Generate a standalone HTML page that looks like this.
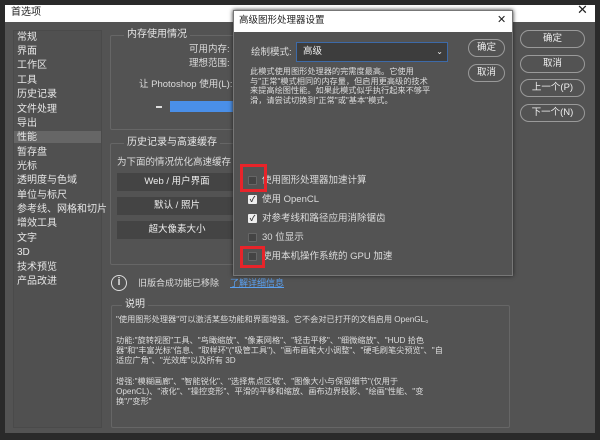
<!DOCTYPE html><html><head><meta charset="utf-8"><style>
*{margin:0;padding:0;box-sizing:border-box}
body{width:600px;height:440px;background:#2a2a2a;position:relative;overflow:hidden;font-family:"Liberation Sans","Noto Sans CJK SC",sans-serif;color:#dcdcdc;font-size:9.5px;line-height:12px}
.a{position:absolute;white-space:nowrap}
.main{left:5px;top:5px;width:590px;height:428px;background:#535353}
.tb{left:5px;top:5px;width:590px;height:17px;background:#fff;color:#222;font-size:10px;padding:2px 6px}
.side{left:13px;top:30px;width:89px;height:398px;border:1px solid #4a4a4a;background:#505050}
.it{left:17px;font-size:10px;color:#e6e6e6;line-height:12px}
.grp{border:1px solid #666;border-radius:2px}
.gt{background:#535353;padding:0 3px;font-size:10px;color:#e6e6e6}
.btn{border:1px solid #9a9a9a;border-radius:10px;text-align:center;font-size:9.5px;color:#eee;line-height:16px}
.dbtn{background:#444;text-align:center;color:#eee;line-height:18px}
.cb{width:9px;height:9px;border-radius:1px}
.on{background:#eee;color:#333;font-size:8px;line-height:9px;text-align:center;font-weight:bold}
.off{background:#444;border:1px solid #666}
.red{border:3px solid #e8242a}
</style></head><body>
<div class="a main"></div>
<div class="a tb">首选项</div>
<div class="a" style="left:577px;top:4px;color:#222;font-size:13px">✕</div>
<div class="a side"></div>
<div class="a" style="left:14px;top:131px;width:87px;height:12px;background:#666"></div>
<div class="a it" style="top:32px">常规</div><div class="a it" style="top:46px">界面</div><div class="a it" style="top:60px">工作区</div><div class="a it" style="top:75px">工具</div><div class="a it" style="top:89px">历史记录</div><div class="a it" style="top:104px">文件处理</div><div class="a it" style="top:118px">导出</div><div class="a it" style="top:132px">性能</div><div class="a it" style="top:147px">暂存盘</div><div class="a it" style="top:161px">光标</div><div class="a it" style="top:175px">透明度与色域</div><div class="a it" style="top:190px">单位与标尺</div><div class="a it" style="top:204px">参考线、网格和切片</div><div class="a it" style="top:218px">增效工具</div><div class="a it" style="top:233px">文字</div><div class="a it" style="top:247px">3D</div><div class="a it" style="top:262px">技术预览</div><div class="a it" style="top:276px">产品改进</div>
<div class="a grp" style="left:110px;top:35px;width:140px;height:95px"></div>
<div class="a gt" style="left:124px;top:29px">内存使用情况</div>
<div class="a" style="left:189px;top:44px">可用内存:</div>
<div class="a" style="left:189px;top:58px">理想范围:</div>
<div class="a" style="left:139px;top:79px">让 Photoshop 使用(L):</div>
<div class="a" style="left:156px;top:106px;width:6px;height:2px;background:#ddd"></div>
<div class="a" style="left:170px;top:101px;width:64px;height:11px;background:#4a8fe8"></div>
<div class="a grp" style="left:110px;top:143px;width:140px;height:122px"></div>
<div class="a gt" style="left:124px;top:137px">历史记录与高速缓存</div>
<div class="a" style="left:117px;top:157px">为下面的情况优化高速缓存</div>
<div class="a dbtn" style="left:117px;top:173px;width:120px">Web / 用户界面</div>
<div class="a dbtn" style="left:117px;top:197px;width:120px">默认 / 照片</div>
<div class="a dbtn" style="left:117px;top:221px;width:120px">超大像素大小</div>
<div class="a" style="left:111px;top:275px;width:16px;height:16px;border:1.5px solid #ddd;border-radius:50%;text-align:center;font-size:11px;line-height:13px;font-weight:bold">i</div>
<div class="a" style="left:138px;top:277px;font-size:9px">旧版合成功能已移除</div>
<div class="a" style="left:230px;top:277px;font-size:9px;color:#5aa0f0;text-decoration:underline">了解详细信息</div>
<div class="a grp" style="left:111px;top:305px;width:399px;height:123px"></div>
<div class="a gt" style="left:122px;top:299px">说明</div>
<div class="a" style="left:116px;top:315px;font-size:8.2px;line-height:10.3px;white-space:normal;width:330px">"使用图形处理器"可以激活某些功能和界面增强。它不会对已打开的文档启用 OpenGL。<br><br>功能:"旋转视图"工具、"鸟瞰缩放"、"像素网格"、"轻击平移"、"细微缩放"、"HUD 拾色器"和"丰富光标"信息、"取样环"("吸管工具")、"画布画笔大小调整"、"硬毛刷笔尖预览"、"自适应广角"、"光效库"以及所有 3D<br><br>增强:"模糊画廊"、"智能锐化"、"选择焦点区域"、"图像大小与保留细节"(仅用于 OpenCL)、"液化"、"操控变形"、平滑的平移和缩放、画布边界投影、"绘画"性能、"变换"/"变形"</div>
<div class="a btn" style="left:520px;top:30px;width:65px">确定</div>
<div class="a btn" style="left:520px;top:55px;width:65px">取消</div>
<div class="a btn" style="left:520px;top:79px;width:65px">上一个(P)</div>
<div class="a btn" style="left:520px;top:104px;width:65px">下一个(N)</div>
<!-- sub dialog -->
<div class="a" style="left:233px;top:10px;width:280px;height:266px;background:#535353;border:1px solid #777;box-shadow:0 0 4px #222"></div>
<div class="a" style="left:234px;top:11px;width:278px;height:21px;background:#fff;color:#222;font-size:9.5px;padding:4px 5px">高级图形处理器设置</div>
<div class="a" style="left:497px;top:14px;color:#222;font-size:11px">✕</div>
<div class="a" style="left:251px;top:47px">绘制模式:</div>
<div class="a" style="left:296px;top:42px;width:152px;height:20px;background:#3d3d3d;border:1px solid #3d6aa8;padding:3px 6px;color:#eee">高级<span style="position:absolute;right:4px;top:3px;font-size:8px">⌄</span></div>
<div class="a" style="left:250px;top:67px;font-size:8.2px;line-height:9.5px">此模式使用图形处理器的完需度最高。它使用<br>与"正常"模式相同的内存量，但启用更高级的技术<br>来提高绘图性能。如果此模式似乎执行起来不够平<br>滑，请尝试切换到"正常"或"基本"模式。</div>
<div class="a btn" style="left:468px;top:39px;width:37px">确定</div>
<div class="a btn" style="left:468px;top:64px;width:37px">取消</div>
<div class="a cb off" style="left:248px;top:176px"></div><div class="a" style="left:262px;top:175px">使用图形处理器加速计算</div>
<div class="a cb on" style="left:248px;top:195px">✓</div><div class="a" style="left:262px;top:194px">使用 OpenCL</div>
<div class="a cb on" style="left:248px;top:214px">✓</div><div class="a" style="left:262px;top:213px">对参考线和路径应用消除锯齿</div>
<div class="a cb off" style="left:248px;top:233px"></div><div class="a" style="left:262px;top:232px">30 位显示</div>
<div class="a cb off" style="left:248px;top:252px"></div><div class="a" style="left:262px;top:251px">使用本机操作系统的 GPU 加速</div>
<div class="a red" style="left:240px;top:164px;width:27px;height:28px"></div>
<div class="a red" style="left:240px;top:246px;width:25px;height:22px"></div>
</body></html>
